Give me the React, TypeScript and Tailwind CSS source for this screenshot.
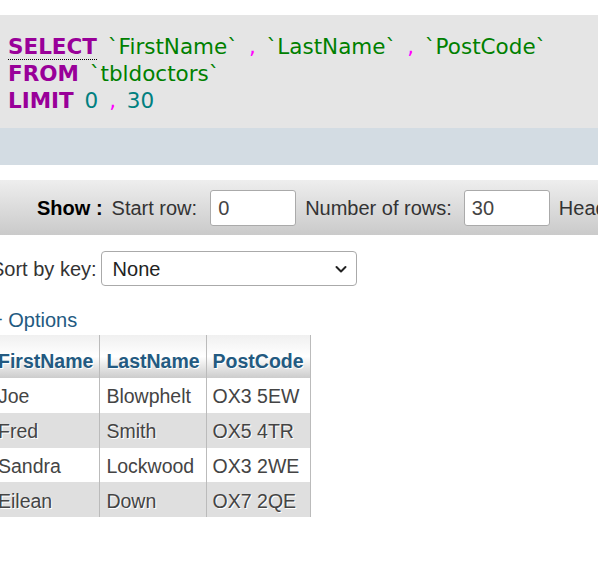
const rows = [
    { first: "Joe", last: "Blowphelt", post: "OX3 5EW" },
    { first: "Fred", last: "Smith", post: "OX5 4TR" },
    { first: "Sandra", last: "Lockwood", post: "OX3 2WE" },
    { first: "Eilean", last: "Down", post: "OX7 2QE" },
];

function Chevron() {
    return (
        <svg width="14" height="14" viewBox="0 0 14 14" fill="none">
            <path d="M2.5 5 L7 9.5 L11.5 5" stroke="#222" strokeWidth="2" strokeLinecap="round" strokeLinejoin="round" />
        </svg>
    );
}

export default function App() {
    return (
        <div className="h-[562px] w-[598px] overflow-hidden bg-white pt-[15px] font-['Liberation_Sans',Arial,sans-serif] text-[20px] text-[#444]">
            <div className="h-[113px] bg-[#e5e5e5] pl-[8px] pt-[18px] font-['DejaVu_Sans',Verdana,sans-serif] text-[21.5px] leading-[27px] whitespace-nowrap [word-spacing:4px]">
                <div>
                    <span className="border-b border-dotted border-black font-bold text-[#990099]">SELECT</span>{" "}
                    <span className="text-[#008000]">`FirstName`</span>{" "}
                    <span className="text-[#ff00ff]">,</span>{" "}
                    <span className="text-[#008000]">`LastName`</span>{" "}
                    <span className="text-[#ff00ff]">,</span>{" "}
                    <span className="text-[#008000]">`PostCode`</span>
                </div>
                <div>
                    <span className="font-bold text-[#990099]">FROM</span>{" "}
                    <span className="text-[#008000]">`tbldoctors`</span>
                </div>
                <div>
                    <span className="font-bold text-[#990099]">LIMIT</span>{" "}
                    <span className="text-[#008080]">0</span>{" "}
                    <span className="text-[#ff00ff]">,</span>{" "}
                    <span className="text-[#008080]">30</span>
                </div>
            </div>
            <div className="h-[37px] bg-[#d3dce3]" />

            <div className="mt-[15px] flex h-[55px] items-center whitespace-nowrap bg-gradient-to-b from-[#eeeeee] to-[#cacaca] pl-[37px] text-[#333]">
                <span className="font-bold text-black">Show :</span>
                <span className="ml-[9px]">Start row:</span>
                <div className="ml-[13px] flex h-[36px] w-[86px] shrink-0 items-center rounded-[3px] border border-[#aaa] bg-white pl-[7px] text-[#444]">
                    0
                </div>
                <span className="ml-[9px]">Number of rows:</span>
                <div className="ml-[12px] flex h-[36px] w-[86px] shrink-0 items-center rounded-[3px] border border-[#aaa] bg-white pl-[7px] text-[#444]">
                    30
                </div>
                <span className="ml-[9px]">Headers every:</span>
            </div>

            <div className="ml-[-9px] mt-[16px] flex items-center whitespace-nowrap text-[#333]">
                <span>Sort by key:</span>
                <div className="ml-[4px] flex h-[35px] w-[256px] items-center justify-between rounded-[4px] border border-[#aaa] bg-white pl-[11px] pr-[8px] text-[#222]">
                    <span>None</span>
                    <Chevron />
                </div>
            </div>

            <div className="ml-[-9px] mt-[22px] leading-[24px] text-[#235a81]">+ Options</div>

            <table className="ml-[-8px] mt-[3px] border-collapse text-[19.5px] leading-[23px] [text-shadow:1px_1px_0_#fff]">
                <thead>
                    <tr className="bg-gradient-to-b from-[#f0f0f0] via-white to-[#cccccc]">
                        {["FirstName", "LastName", "PostCode"].map((h, i) => (
                            <th
                                key={h}
                                className={`h-[43px] px-[6px] pt-[9px] text-left font-bold text-[#235a81] ${i > 0 ? "border-l border-[#bbb]" : ""} ${i === 2 ? "border-r border-[#bbb]" : ""}`}
                            >
                                {h}
                            </th>
                        ))}
                    </tr>
                </thead>
                <tbody>
                    {rows.map((r, idx) => (
                        <tr key={r.first} className={idx % 2 === 0 ? "bg-white" : "bg-[#dfdfdf]"}>
                            <td className="h-[34.75px] px-[6px] pt-[3px]">{r.first}</td>
                            <td className="border-l border-[#bbb] px-[6px] pt-[3px]">{r.last}</td>
                            <td className="border-l border-r border-[#bbb] px-[6px] pt-[3px]">{r.post}</td>
                        </tr>
                    ))}
                </tbody>
            </table>
        </div>
    );
}
